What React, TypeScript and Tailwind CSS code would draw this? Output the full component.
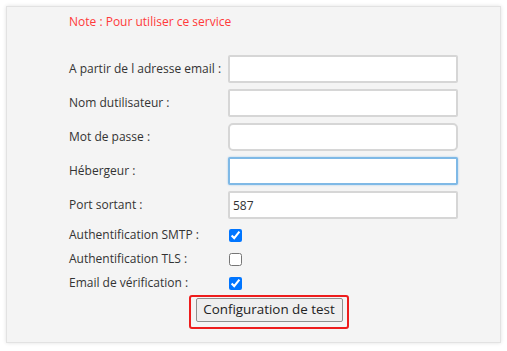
import React from "react";

const font = { fontFamily: '"Open Sans", "Liberation Sans", sans-serif' };

function TextRow({ label, value, variant }: { label: string; value?: string; variant?: "round" | "focus" }) {
  let box = "border-[#d6d6d6] rounded-[2px]";
  if (variant === "round") box = "border-[#d6d6d6] rounded-[5px]";
  if (variant === "focus") box = "border-[#7fb9e6] rounded-[2px] shadow-[0_0_2px_rgba(100,170,230,0.6)]";
  return (
    <div className="flex items-center h-[28px]">
      <label className="w-[159px] shrink-0 text-[#333]">{label}</label>
      <input
        type="text"
        defaultValue={value}
        className={`w-[230px] h-[28px] bg-white border-2 px-[3px] text-[12px] text-[#333] outline-none ${box}`}
      />
    </div>
  );
}

function CheckRow({ label, checked }: { label: string; checked?: boolean }) {
  return (
    <div className="flex items-center h-[24px]">
      <label className="w-[160px] shrink-0 text-[#333]">{label}</label>
      <input type="checkbox" defaultChecked={checked} className="w-[13px] h-[13px] m-0" />
    </div>
  );
}

export default function App() {
  return (
    <div className="bg-white w-[507px] h-[351px] p-[6px]" style={font}>
      <div className="bg-[#f4f4f4] h-[337px] border border-[#e2e2e2] shadow-[0_0_4px_rgba(0,0,0,0.12)] pl-[62px] pt-[6px] text-[12px]">
        <p className="text-[#ff3a3a] h-[18px] leading-[18px]">Note : Pour utiliser ce service</p>
        <div className="mt-[24px] flex flex-col gap-[6px]">
          <TextRow label="A partir de l adresse email :" />
          <TextRow label="Nom dutilisateur :" />
          <TextRow label="Mot de passe :" variant="round" />
          <TextRow label="Hébergeur :" variant="focus" />
          <TextRow label="Port sortant :" value="587" />
        </div>
        <div className="mt-[4px] flex flex-col">
          <CheckRow label="Authentification SMTP :" checked />
          <CheckRow label="Authentification TLS :" />
          <CheckRow label="Email de vérification :" checked />
        </div>
        <div className="ml-[120px] w-[160px] h-[34px] border-2 border-[#ee1c1c] rounded-[3px] flex items-start justify-center pt-[1px]">
          <button className="h-[24px] w-[147px] bg-[#efefef] border border-[#8f8f8f] rounded-[2px] text-[13.4px] text-[#222] leading-none">
            Configuration de test
          </button>
        </div>
      </div>
    </div>
  );
}
